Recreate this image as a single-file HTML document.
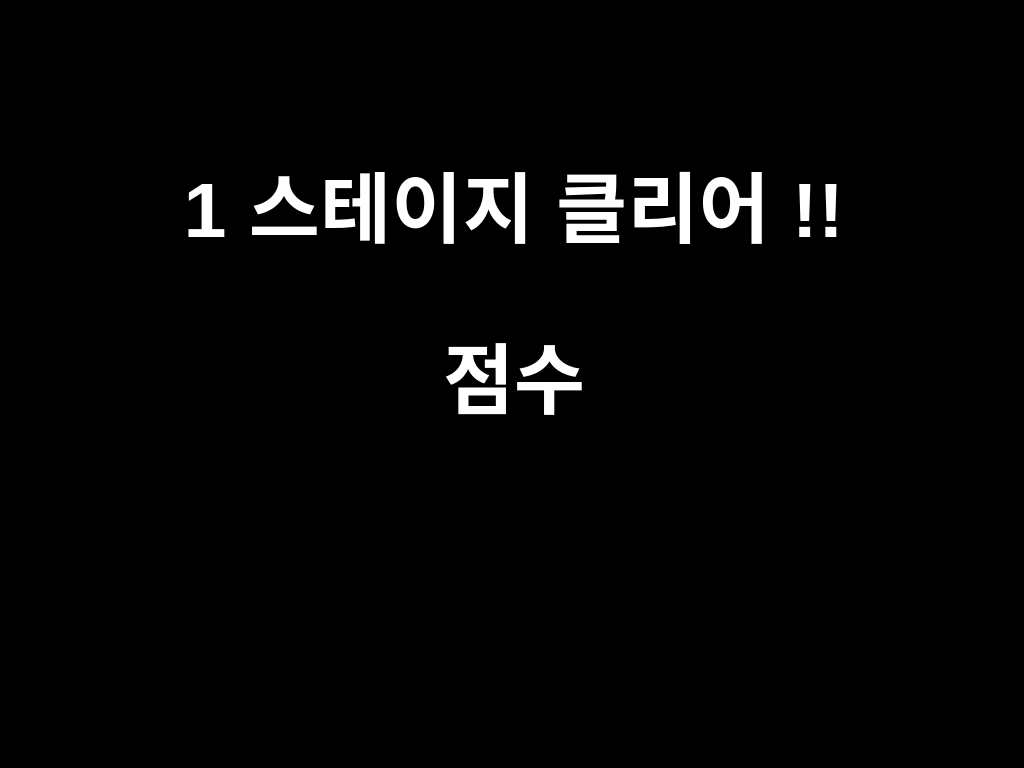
<!DOCTYPE html>
<html><head><meta charset="utf-8"><style>
html,body{margin:0;padding:0;background:#000;width:1024px;height:768px;overflow:hidden}
div{position:absolute;left:0;width:1028px;text-align:center;color:#fff;font-family:"Liberation Sans","Noto Sans CJK KR",sans-serif;font-weight:bold;font-size:77px;line-height:77px;white-space:nowrap}
</style></head><body>
<div style="top:173px;letter-spacing:0.5px">1 스테이지 클리어 !!</div>
<div style="top:344px">점수</div>
</body></html>
